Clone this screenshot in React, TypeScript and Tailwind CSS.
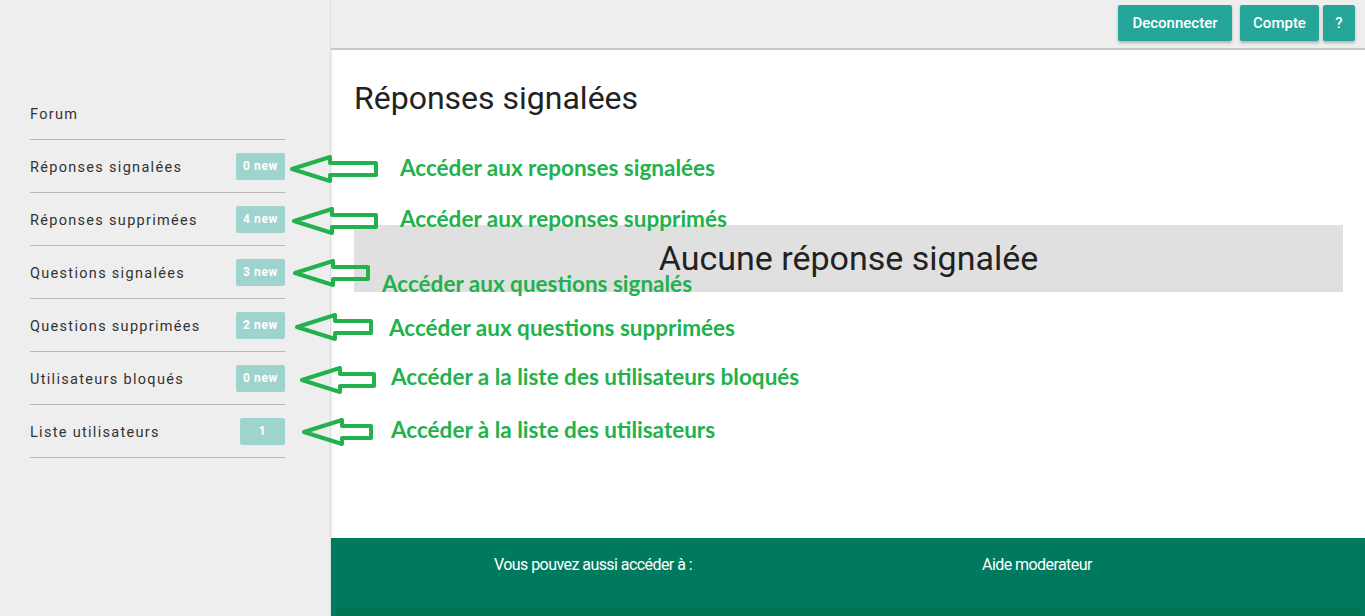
import React from 'react';

type MenuItem = { label: string; badge?: string; narrow?: boolean };

const menu: MenuItem[] = [
  { label: 'Forum' },
  { label: 'Réponses signalées', badge: '0 new' },
  { label: 'Réponses supprimées', badge: '4 new' },
  { label: 'Questions signalées', badge: '3 new' },
  { label: 'Questions supprimées', badge: '2 new' },
  { label: 'Utilisateurs bloqués', badge: '0 new' },
  { label: 'Liste utilisateurs', badge: '1', narrow: true },
];

// annotation arrows drawn over the page (screenshot markup)
const notes = [
  { ax: 290, ay: 155, aw: 88, text: 'Accéder aux reponses signalées', tx: 400, ty: 153 },
  { ax: 292, ay: 207, aw: 86, text: 'Accéder aux reponses supprimés', tx: 400, ty: 204 },
  { ax: 293, ay: 259, aw: 77, text: 'Accéder aux questions signalés', tx: 382, ty: 269 },
  { ax: 295, ay: 313, aw: 78, text: 'Accéder aux questions supprimées', tx: 389, ty: 313 },
  { ax: 300, ay: 366, aw: 76, text: 'Accéder a la liste des utilisateurs bloqués', tx: 391, ty: 362 },
  { ax: 302, ay: 418, aw: 71, text: 'Accéder à la liste des utilisateurs', tx: 391, ty: 415 },
];

const Arrow = ({ w }: { w: number }) => {
  const head = 40;
  return (
    <svg width={w} height={28} viewBox={`0 0 ${w} 28`} fill="none">
      <polygon
        points={`2,14 ${head},2 ${head},8 ${w - 2},8 ${w - 2},20 ${head},20 ${head},26`}
        stroke="#22b14c"
        strokeWidth="4"
        strokeLinejoin="round"
      />
    </svg>
  );
};

const SideBar = () => (
  <aside className="w-[331px] shrink-0 border-r border-[#dcdcdc] bg-[#eeeeee] pt-[87px] shadow-[1px_0_3px_rgba(0,0,0,0.08)]">
    <ul className="px-[30px] w-[315px]">
      {menu.map((item) => (
        <li
          key={item.label}
          className="flex h-[53px] items-center justify-between border-b border-[#b8b8b8] text-[14.5px] text-[#333]"
        >
          <span className="pt-[4px] tracking-[0.09em]">{item.label}</span>
          {item.badge && (
            <span
              className={`flex h-[27px] items-center justify-center rounded-[2px] bg-[#9fd3cd] text-[12px] font-bold tracking-[0.05em] text-white ${item.narrow ? 'w-[45px]' : 'w-[49px]'}`}
            >
              {item.badge}
            </span>
          )}
        </li>
      ))}
    </ul>
  </aside>
);

const btn =
  'h-[36px] rounded-[2px] bg-[#26a69a] text-[15px] font-medium text-white shadow-[0_2px_3px_rgba(0,0,0,0.25)]';

const TopBar = () => (
  <header className="flex h-[50px] shrink-0 items-start justify-end border-b-2 border-[#c6c6c6] bg-[#eeeeee] pr-[10px] pt-[5px]">
    <button className={`${btn} w-[114px]`}>Deconnecter</button>
    <button className={`${btn} ml-[8px] w-[79px]`}>Compte</button>
    <button className={`${btn} ml-[4px] w-[32px]`}>?</button>
  </header>
);

export default function App() {
  return (
    <div className="relative flex h-[616px] w-[1365px] overflow-hidden bg-white font-['Roboto',sans-serif]">
      <SideBar />
      <main className="flex min-w-0 flex-1 flex-col">
        <TopBar />
        <section className="flex-1 px-[23px]">
          <h1 className="mt-[29px] text-[32px] leading-[38px] text-[#222]">Réponses signalées</h1>
          <div className="mt-[108px] flex h-[67px] w-[989px] items-center justify-center bg-[#e0e0e0] text-[34px] text-[#222]">
            Aucune réponse signalée
          </div>
        </section>
        <footer className="flex h-[78px] flex-col bg-[#007a5e] text-white">
          <div className="flex flex-1 pt-[15px] text-[16px] tracking-[-0.035em]">
            <span className="w-[651px] pl-[163px]">Vous pouvez aussi accéder à :</span>
            <span>Aide moderateur</span>
          </div>
          <div className="mx-[5px] h-[8px] bg-[#00714f] opacity-70" />
        </footer>
      </main>

      {notes.map((n) => (
        <React.Fragment key={n.text}>
          <div className="absolute" style={{ left: n.ax, top: n.ay }}>
            <Arrow w={n.aw} />
          </div>
          <div
            className="absolute whitespace-nowrap font-['Lato',sans-serif] text-[22.5px] font-bold leading-[30px] text-[#22b14c]"
            style={{ left: n.tx, top: n.ty }}
          >
            {n.text}
          </div>
        </React.Fragment>
      ))}
    </div>
  );
}
